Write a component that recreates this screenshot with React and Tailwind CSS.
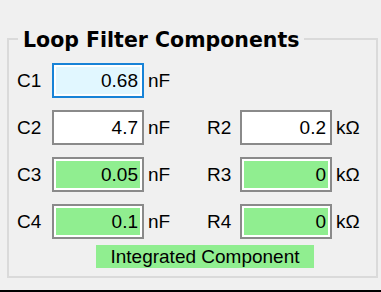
import React from 'react';

const rows = [
  { c: ['C1', '0.68', 'focus'], r: null },
  { c: ['C2', '4.7', 'plain'], r: ['R2', '0.2', 'plain'] },
  { c: ['C3', '0.05', 'green'], r: ['R3', '0', 'green'] },
  { c: ['C4', '0.1', 'green'], r: ['R4', '0', 'green'] },
];

const ValueBox = ({ value, kind }) => {
  const outer = kind === 'focus' ? 'border-[#1883d7]' : 'border-[#8a8a8a]';
  const inner = kind === 'focus' ? 'bg-[#e1f7ff]' : kind === 'green' ? 'bg-[#90ee90]' : 'bg-white';
  return (
    <div className={`w-[92px] h-[35px] border-2 ${outer} bg-white p-[2px]`}>
      <div className={`h-full ${inner} flex items-center justify-end pr-[2px]`}>{value}</div>
    </div>
  );
};

const Field = ({ label, value, kind, unit, labelW }) => (
  <div className="flex items-center">
    <span className={labelW}>{label}</span>
    <ValueBox value={value} kind={kind} />
    <span className="ml-[4px]">{unit}</span>
  </div>
);

export default function App() {
  return (
    <div
      className="w-[381px] h-[292px] bg-[#f0f0f0] border-b-2 border-black overflow-hidden text-[19px] text-black leading-none"
      style={{ fontFamily: '"Liberation Sans", Arial, sans-serif' }}
    >
      <div className="relative ml-[7px] mt-[38px] w-[371px] h-[240px] border-2 border-[#dadada] pt-[23px] pl-[8px]">
        <span
          className="absolute left-[9px] -top-[12px] px-[5px] bg-[#f0f0f0] text-[20.5px] leading-[24px] font-bold"
          style={{ fontFamily: '"DejaVu Sans", sans-serif' }}
        >
          Loop Filter Components
        </span>

        <div className="flex flex-col gap-[12px]">
          {rows.map((row) => (
            <div key={row.c[0]} className="flex items-center">
              <div className="w-[190px]">
                <Field label={row.c[0]} value={row.c[1]} kind={row.c[2]} unit="nF" labelW="w-[35px]" />
              </div>
              {row.r && (
                <Field label={row.r[0]} value={row.r[1]} kind={row.r[2]} unit="kΩ" labelW="w-[33px]" />
              )}
            </div>
          ))}
        </div>

        <div className="mt-[6px] ml-[79px] w-[218px] h-[23px] bg-[#90ee90] flex items-center justify-center">
          Integrated Component
        </div>
      </div>
    </div>
  );
}
